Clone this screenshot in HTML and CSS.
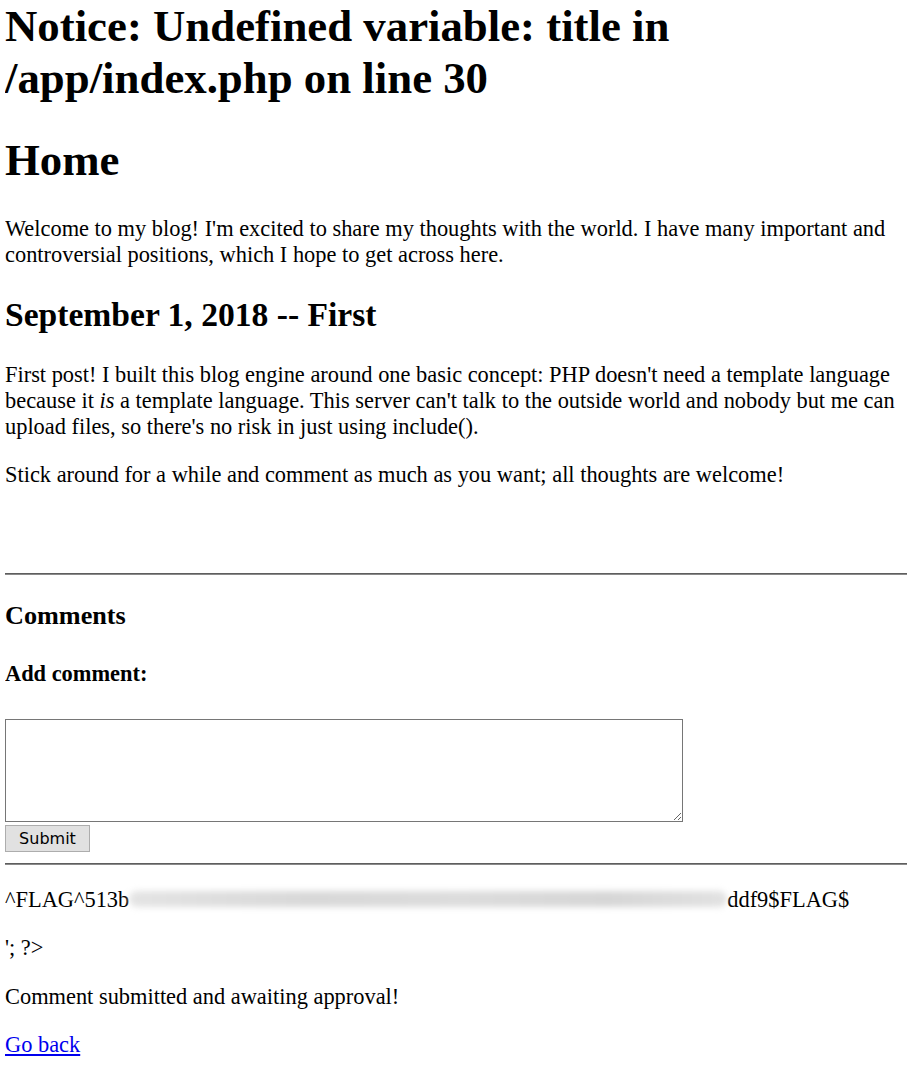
FILE: index.html
```html
<!DOCTYPE html>
<html>
<head>
<meta charset="utf-8">
<title>Blog</title>
<link rel="stylesheet" href="styles.css">
</head>
<body>
<h1 class="title">Notice: Undefined variable: title in /app/index.php on line 30</h1>
<h1 class="title">Home</h1>
<p>Welcome to my blog! I'm excited to share my thoughts with the world. I have many important and controversial positions, which I hope to get across here.</p>
<h2 class="post-title">September 1, 2018 -- First</h2>
<p>First post! I built this blog engine around one basic concept: PHP doesn't need a template language because it <i>is</i> a template language. This server can't talk to the outside world and nobody but me can upload files, so there's no risk in just using include().</p>
<p>Stick around for a while and comment as much as you want; all thoughts are welcome!</p>
<div class="spacer"></div>
<hr class="rule">
<h3 class="comments">Comments</h3>
<h4 class="add">Add comment:</h4>
<form class="comment-form">
<textarea class="comment-box"></textarea>
<button class="submit" type="button">Submit</button>
</form>
<hr class="rule">
<p class="flag">^FLAG^513b<span class="redact"><span class="smudge"></span></span>ddf9$FLAG$</p>
<p>'; ?&gt;</p>
<p>Comment submitted and awaiting approval!</p>
<p><a class="back" href="#">Go back</a></p>
</body>
</html>
```

FILE: styles.css
```css
html {
  background: #fff;
}
body {
  margin: 0 0 0 5px;
  font-family: "Liberation Serif", "Times New Roman", serif;
  font-size: 22.4px;
  color: #000;
}
h1.title {
  font-size: 2em;
  margin: 0.67em 0;
}
h1.title:first-child {
  margin-top: 0;
}
h2.post-title {
  font-size: 1.5em;
  margin: 0.83em 0;
}
p {
  margin: 1em 0;
}
.spacer {
  height: 51px;
}
hr.rule {
  margin: 11px 0;
  height: 0;
  border: 0;
  border-top: 1px solid #5e5e5e;
  border-bottom: 1px solid #8a8a8a;
}
h3.comments {
  font-size: 1.17em;
  margin: 1em 0;
}
h4.add {
  font-size: 1em;
  margin: 1.33em 0 32px;
}
.comment-form {
  display: flex;
  flex-direction: column;
  align-items: flex-start;
  gap: 3px;
}
.comment-box {
  box-sizing: border-box;
  width: 678px;
  height: 103px;
  margin: 0;
  border: 1px solid #767676;
  padding: 2px;
  font-family: "Liberation Mono", monospace;
  background: #fff;
}
.submit {
  box-sizing: border-box;
  width: 85px;
  height: 27px;
  margin: 0;
  padding: 0;
  border: 1px solid #adadad;
  background: #e1e1e1;
  font-family: "DejaVu Sans", Verdana, sans-serif;
  font-size: 16px;
  color: #000;
}
.flag {
  white-space: nowrap;
}
.redact {
  display: inline-block;
  width: 598px;
  height: 20px;
  vertical-align: -2px;
  position: relative;
}
.smudge {
  position: absolute;
  left: 0;
  right: 0;
  top: 2px;
  height: 16px;
  background: linear-gradient(90deg, #e4e4e4 0%, #d8d8d8 30%, #dcdcdc 55%, #d6d6d6 80%, #e2e2e2 100%);
  border-radius: 8px;
  filter: blur(3px);
}
a.back {
  color: #0000ee;
}
```
